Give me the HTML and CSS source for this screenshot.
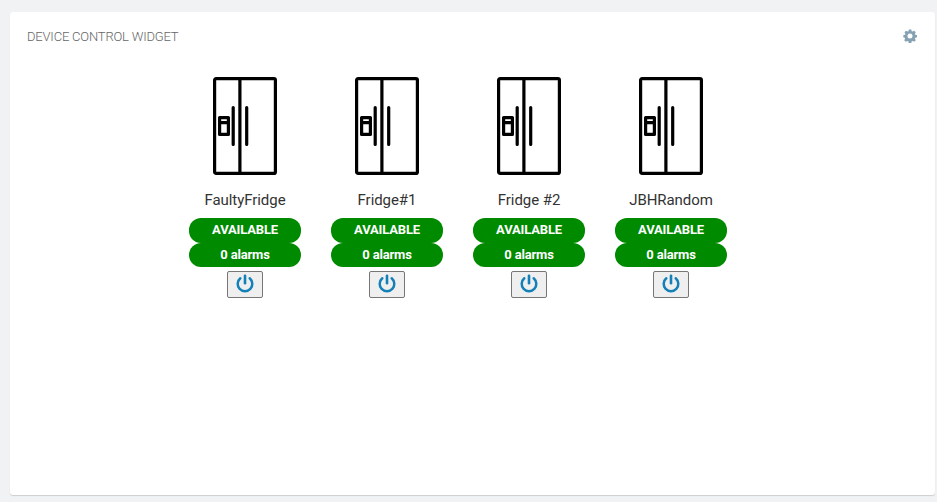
FILE: index.html
```html
<!DOCTYPE html>
<html lang="en">
<head>
<meta charset="utf-8">
<title>Device Control Widget</title>
<link rel="stylesheet" href="styles.css">
</head>
<body>
<svg class="sprite" aria-hidden="true">
  <symbol id="fridge" viewBox="0 0 64 98">
    <g fill="none" stroke="#000" stroke-linecap="round" stroke-linejoin="round" stroke-width="3.200">
      <rect x="1.600" y="1.600" width="60.800" height="94.800" rx="1.500"/>
      <path d="M26.900 1.500v95M20.200 30.500v37M33.700 30.500v37"/>
      <path d="M6.600 40.600h8.800v16.800H6.600zM6.600 45.600h8.800"/>
    </g>
  </symbol>
  <symbol id="power" viewBox="0 0 18 20">
    <path d="M4.300 4.300A7.300 7.300 0 1 0 13.700 4.300" fill="none" stroke="#1480b8" stroke-width="2.500" stroke-linecap="round"/>
    <path d="M9 1.700v7.500" fill="none" stroke="#1480b8" stroke-width="2.600" stroke-linecap="round"/>
  </symbol>
</svg>
<main class="card">
  <header class="card-header">
    <h1 class="title">DEVICE CONTROL WIDGET</h1>
    <svg class="gear" viewBox="0 0 14 14"><path fill="#85a1b4" fill-rule="evenodd" d="M5.700 .5h2.600l.4 1.700 1 .4 1.500-.9 1.600 1.600-.9 1.500.4 1 1.700.4v2.100l-1.700.4-.4 1 .9 1.500-1.600 1.600-1.500-.9-1 .4-.4 1.700H5.700l-.4-1.700-1-.4-1.500.9-1.600-1.600.9-1.500-.4-1L.3 8.300V6.200L2 5.800l.4-1-.9-1.500 1.600-1.600 1.500.9 1-.4zM7 4.600a2.500 2.500 0 1 0 0 5 2.500 2.500 0 0 0 0-5z"/></svg>
  </header>
  <section class="devices">
    <article class="device">
      <svg class="fridge"><use href="#fridge"/></svg>
      <div class="name">FaultyFridge</div>
      <div class="pill status">AVAILABLE</div>
      <div class="pill alarms">0 alarms</div>
      <button class="power" aria-label="Power"><svg><use href="#power"/></svg></button>
    </article>
    <article class="device">
      <svg class="fridge"><use href="#fridge"/></svg>
      <div class="name">Fridge#1</div>
      <div class="pill status">AVAILABLE</div>
      <div class="pill alarms">0 alarms</div>
      <button class="power" aria-label="Power"><svg><use href="#power"/></svg></button>
    </article>
    <article class="device">
      <svg class="fridge"><use href="#fridge"/></svg>
      <div class="name">Fridge #2</div>
      <div class="pill status">AVAILABLE</div>
      <div class="pill alarms">0 alarms</div>
      <button class="power" aria-label="Power"><svg><use href="#power"/></svg></button>
    </article>
    <article class="device">
      <svg class="fridge"><use href="#fridge"/></svg>
      <div class="name">JBHRandom</div>
      <div class="pill status">AVAILABLE</div>
      <div class="pill alarms">0 alarms</div>
      <button class="power" aria-label="Power"><svg><use href="#power"/></svg></button>
    </article>
  </section>
</main>
</body>
</html>
```
FILE: styles.css
```css
* { box-sizing: border-box; }
body {
  margin: 0;
  height: 502px;
  padding: 12px 2px 7px 10px;
  background: #f0f2f4;
  font-family: Roboto, "Liberation Sans", sans-serif;
  color: #333;
  overflow: hidden;
}
.sprite { display: none; }
.card {
  height: 483px;
  background: #fff;
  border-radius: 3px;
  box-shadow: 0 1px 1px rgba(0, 0, 0, .15);
}
.card-header {
  display: flex;
  align-items: center;
  justify-content: space-between;
  height: 48px;
  padding: 0 18px 0 17px;
}
.title {
  margin: 2px 0 0;
  font-size: 13px;
  line-height: 18px;
  font-weight: 300;
  letter-spacing: -.19px;
  color: #666;
}
.gear { width: 14px; height: 14px; margin-top: -1px; }
.devices {
  display: flex;
  gap: 30px;
  padding: 17px 0 0 179px;
}
.device {
  display: flex;
  flex-direction: column;
  align-items: center;
  width: 112px;
}
.fridge { display: block; width: 64px; height: 98px; }
.name {
  margin: 15px 0 8px;
  font-size: 15px;
  line-height: 20px;
  letter-spacing: -.06px;
  white-space: nowrap;
}
.pill {
  width: 112px;
  border-radius: 12px;
  background: #008a00;
  color: #fff;
  font-size: 13px;
  font-weight: 700;
  letter-spacing: -.16px;
  text-align: center;
}
.status { height: 25px; line-height: 24px; }
.alarms { height: 24px; line-height: 24px; }
.power {
  width: 36px;
  height: 27px;
  margin-top: 4px;
  padding: 0 0 2px;
  display: flex;
  align-items: center;
  justify-content: center;
  background: #efefef;
  border: 1px solid #767676;
  border-radius: 2px;
}
.power svg { width: 18px; height: 20px; }
```
